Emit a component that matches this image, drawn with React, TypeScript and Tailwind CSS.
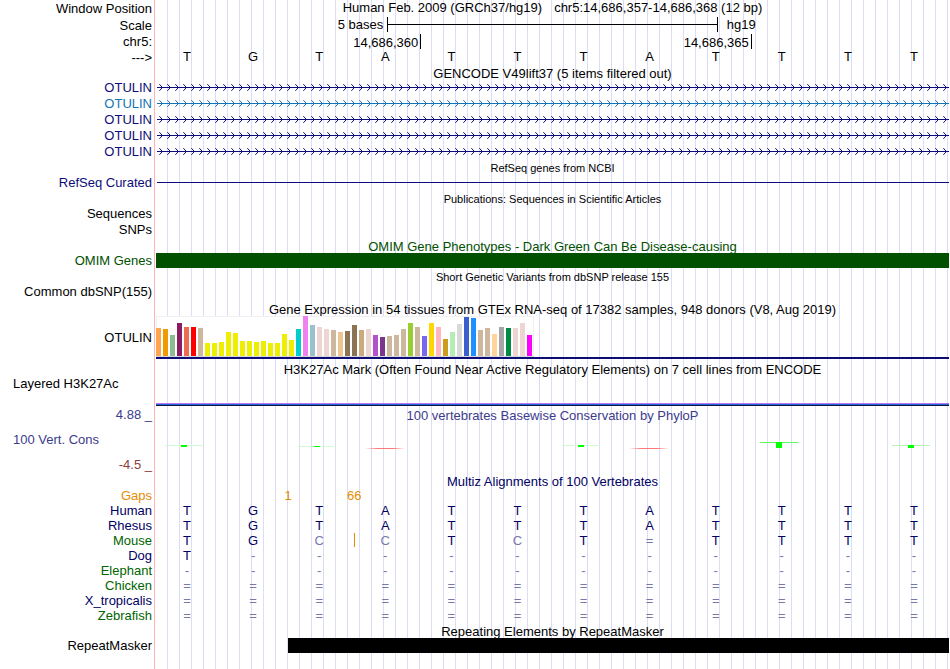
import { useId, type ReactNode } from 'react';

const genes = ['#0c0c78', '#1673b4', '#0c0c78', '#0c0c78', '#0c0c78'];

const tissues: [number, string][] = [
  [28, '#ffa54f'], [27, '#ee9a00'], [21, '#8fbc8f'], [33, '#8b1c62'], [29, '#ee6a50'], [29, '#ff0000'],
  [28, '#cdb79e'], [13, '#eeee00'], [13, '#eeee00'], [14, '#eeee00'], [24, '#eeee00'], [23, '#eeee00'],
  [15, '#eeee00'], [15, '#eeee00'], [14, '#eeee00'], [15, '#eeee00'], [13, '#eeee00'], [13, '#eeee00'],
  [22, '#eeee00'], [16, '#eeee00'], [27, '#00cdcd'], [40, '#ee82ee'], [31, '#9ac0cd'], [29, '#eed5d2'],
  [27, '#eed5d2'], [26, '#cdb79e'], [24, '#eec591'], [25, '#8b7355'], [31, '#8b7355'], [26, '#cdaa7d'],
  [27, '#eed5d2'], [21, '#b452cd'], [19, '#7a378b'], [20, '#cdb79e'], [21, '#cdb79e'], [27, '#cdb79e'],
  [33, '#9acd32'], [29, '#cdb79e'], [20, '#7a67ee'], [33, '#ffd700'], [29, '#ffb6c1'], [17, '#cd9b1d'],
  [24, '#b4eeb4'], [32, '#d9d9d9'], [39, '#3a5fcd'], [38, '#1e90ff'], [26, '#cdb79e'], [28, '#cdb79e'],
  [22, '#ffd39b'], [29, '#a6a6a6'], [28, '#008b45'], [28, '#eed5d2'], [33, '#eed5d2'], [21, '#ff00ff'],
];

const species = [
  { name: 'Human', color: 'text-[#000064]', bases: 'TGTATTTATTTT' },
  { name: 'Rhesus', color: 'text-[#000064]', bases: 'TGTATTTATTTT' },
  { name: 'Mouse', color: 'text-[#006400]', bases: 'TGCCTCT=TTTT' },
  { name: 'Dog', color: 'text-[#000064]', bases: 'T-----------' },
  { name: 'Elephant', color: 'text-[#006400]', bases: '------------' },
  { name: 'Chicken', color: 'text-[#006400]', bases: '============' },
  { name: 'X_tropicalis', color: 'text-[#000064]', bases: '============' },
  { name: 'Zebrafish', color: 'text-[#006400]', bases: '============' },
];

const reference = 'TGTATTTATTTT';

function Row({ label, height = 'h-4', align = 'items-start', color = 'text-black', children }: {
  label?: ReactNode;
  height?: string;
  align?: string;
  color?: string;
  children?: ReactNode;
}) {
  return (
    <div className={`flex ${height}`}>
      <div className={`flex w-[156px] shrink-0 justify-end pr-1 ${align} ${color}`}>{label}</div>
      <div className="relative min-w-0 flex-1">{children}</div>
    </div>
  );
}

function Title({ height, color = 'text-black', small, label, labelColor, children }: {
  height: string;
  color?: string;
  small?: boolean;
  label?: string;
  labelColor?: string;
  children: ReactNode;
}) {
  return (
    <Row height={height} align="items-center" label={label} color={labelColor}>
      <h2 className={`flex h-full items-end justify-center leading-[13px] ${small ? 'text-[11px]' : ''} ${color}`}>
        {children}
      </h2>
    </Row>
  );
}

function Bases({ bases, main, strict }: { bases: string; main: string; strict?: boolean }) {
  return (
    <div className="-ml-0.5 mr-0.5 grid grid-cols-12 text-center">
      {bases.split('').map((base, i) => (
        <span key={i} className={strict && base !== reference[i] ? 'text-[#7878aa]' : main}>{base}</span>
      ))}
    </div>
  );
}

function GeneLine({ color }: { color: string }) {
  const id = useId();
  return (
    <svg className="block h-[15px] w-full" fill="none" stroke={color}>
      <defs>
        <pattern id={id} width="8" height="15" patternUnits="userSpaceOnUse">
          <path d="M3.4 4.2L6.4 7.5L3.4 10.8" strokeWidth="1" />
        </pattern>
      </defs>
      <rect width="100%" height="15" fill={`url(#${id})`} stroke="none" />
      <line x1="1" x2="100%" y1="7.5" y2="7.5" shapeRendering="crispEdges" />
    </svg>
  );
}

function Expression() {
  return (
    <svg className="block h-[41px] w-[378px]" shapeRendering="crispEdges">
      <rect width="378" height="41" fill="#f0f0f0" />
      <rect x="1" y="1" width="376" height="39" fill="#fff" />
      <rect y="40" width="378" height="1" fill="#d8d8d8" />
      {tissues.map(([h, fill], i) => (
        <rect key={i} x={i * 7} y={40 - h} width="5" height={h} fill={fill} />
      ))}
    </svg>
  );
}

function Conservation() {
  return (
    <svg className="block h-[50px] w-full" viewBox="0 0 793 50" preserveAspectRatio="xMinYMin meet" shapeRendering="crispEdges">
      <defs>
        <linearGradient id="dip">
          <stop offset="0" stopColor="#ff7878" stopOpacity="0" />
          <stop offset="0.3" stopColor="#ff7878" />
          <stop offset="0.7" stopColor="#ff7878" />
          <stop offset="1" stopColor="#ff7878" stopOpacity="0" />
        </linearGradient>
      </defs>
      <g fill="#d2fad2">
        <rect x="9" y="23" width="38" height="1" />
        <rect x="142" y="24" width="38" height="1" />
        <rect x="406" y="23" width="38" height="1" />
        <rect x="736" y="23" width="38" height="1" fill="#b4f5b4" />
        <rect x="604" y="20" width="38" height="1" fill="#5aff5a" />
      </g>
      <g fill="#00ff00">
        <rect x="25" y="23" width="6" height="2" />
        <rect x="158" y="24" width="6" height="1" />
        <rect x="422" y="23" width="6" height="2" />
        <rect x="620" y="20" width="6" height="6" />
        <rect x="752" y="23" width="6" height="3" />
      </g>
      <rect x="209" y="26" width="40" height="1" fill="url(#dip)" />
      <rect x="473" y="26" width="40" height="1" fill="url(#dip)" />
    </svg>
  );
}

export default function App() {
  return (
    <main className="bg-white pr-px font-['Liberation_Sans',Arial,sans-serif] text-[13px] leading-[15px] text-black">
      <div className="relative pb-[15px]">
        <div className="absolute inset-y-0 left-[154px] w-px bg-[#ffb4b4]" />
        <div className="absolute inset-y-0 left-[156px] right-0 bg-[repeating-linear-gradient(to_right,transparent_0_11px,#dcdcf8_11px_12px)]" />

        <div className="relative">
          <Row label="Window Position" height="h-[17px]" align="items-center">
            <h1 className="flex justify-center gap-3">
              <span>Human Feb. 2009 (GRCh37/hg19)</span>
              <span>chr5:14,686,357-14,686,368 (12 bp)</span>
            </h1>
          </Row>
          <Row label="Scale" height="h-[17px]" align="items-center">
            <div className="flex h-[15px]">
              <div className="flex-1 text-right">
                <span className="pr-1">5 bases</span>
              </div>
              <div className="flex w-5/12 items-center border-x border-black">
                <div className="h-px w-full bg-black" />
              </div>
              <div className="flex-1">
                <span className="pl-[9px]">hg19</span>
              </div>
            </div>
          </Row>
          <Row label="chr5:" height="h-[15px]">
            <div className="flex h-full leading-[17px]">
              <span className="w-1/3 pr-0.5 text-right">14,686,360</span>
              <span className="w-5/12 border-l border-black pr-0.5 text-right">14,686,365</span>
              <span className="flex-1 border-l border-black" />
            </div>
          </Row>
          <Row label="--->" height="h-[17px]" align="items-center">
            <Bases bases={reference} main="text-black" />
          </Row>

          <Title height="h-3.5">GENCODE V49lift37 (5 items filtered out)</Title>
          {genes.map((color, i) => (
            <Row key={i} label="OTULIN" color={i === 1 ? 'text-[#1673b4]' : 'text-[#0c0c78]'}>
              <GeneLine color={color} />
            </Row>
          ))}

          <Title height="h-[15px]" small>RefSeq genes from NCBI</Title>
          <Row label="RefSeq Curated" color="text-[#0c0c78]">
            <div className="flex h-[15px] items-center pl-px">
              <div className="h-px w-full bg-[#0c0c78]" />
            </div>
          </Row>

          <Title height="h-[15px]" small>Publications: Sequences in Scientific Articles</Title>
          <Row label="Sequences" />
          <Row label="SNPs" />

          <Title height="h-[15px]" color="text-[#005000]">OMIM Gene Phenotypes - Dark Green Can Be Disease-causing</Title>
          <Row label="OMIM Genes" color="text-[#005000]">
            <div className="h-[15px] bg-[#005000]" />
          </Row>

          <Title height="h-[15px]" small>Short Genetic Variants from dbSNP release 155</Title>
          <Row label="Common dbSNP(155)" />

          <Title height="h-4">Gene Expression in 54 tissues from GTEx RNA-seq of 17382 samples, 948 donors (V8, Aug 2019)</Title>
          <Row label="OTULIN" height="h-[43px]" align="items-center">
            <Expression />
            <div className="h-0.5 bg-[#0c0c78]" />
          </Row>

          <Title height="h-[17px]">H3K27Ac Mark (Often Found Near Active Regulatory Elements) on 7 cell lines from ENCODE</Title>
          <Row label={<span className="w-full pl-[13px]">Layered H3K27Ac</span>} height="h-[30px]">
            <div className="flex h-full flex-col justify-end">
              <div className="h-px bg-[#b478f0]" />
              <div className="h-px bg-[#1e64dc]" />
              <div className="h-px bg-[#14143c]" />
            </div>
          </Row>

          <Title height="h-4" color="text-[#3c3c8c]" label="4.88 _" labelColor="text-[#3c3c8c]">
            100 vertebrates Basewise Conservation by PhyloP
          </Title>
          <Row
            height="h-[50px]"
            color="text-[#3c3c8c]"
            label={
              <div className="flex h-full w-full flex-col justify-between pl-[13px] pt-2.5">
                <span>100 Vert. Cons</span>
                <span className="text-right text-[#8c3c3c]">-4.5 _</span>
              </div>
            }
          >
            <Conservation />
          </Row>

          <Title height="h-4" color="text-[#000064]">Multiz Alignments of 100 Vertebrates</Title>
          <Row label="Gaps" height="h-[15px]" color="text-[#e68c00]">
            <span className="absolute left-2/12 -translate-x-1/2 text-[#e68c00]">1</span>
            <span className="absolute left-3/12 -translate-x-1/2 text-[#e68c00]">66</span>
          </Row>
          {species.map(({ name, color, bases }) => (
            <Row key={name} label={name} height="h-[15px]" color={color}>
              <Bases bases={bases} main="text-[#000064]" strict />
              {name === 'Mouse' && <div className="absolute left-3/12 top-0 h-3.5 w-px bg-[#e68c00]" />}
            </Row>
          ))}

          <Title height="h-[15px]">Repeating Elements by RepeatMasker</Title>
          <Row label="RepeatMasker">
            <div className="ml-auto h-[15px] w-10/12 bg-black" />
          </Row>
        </div>
      </div>
    </main>
  );
}
